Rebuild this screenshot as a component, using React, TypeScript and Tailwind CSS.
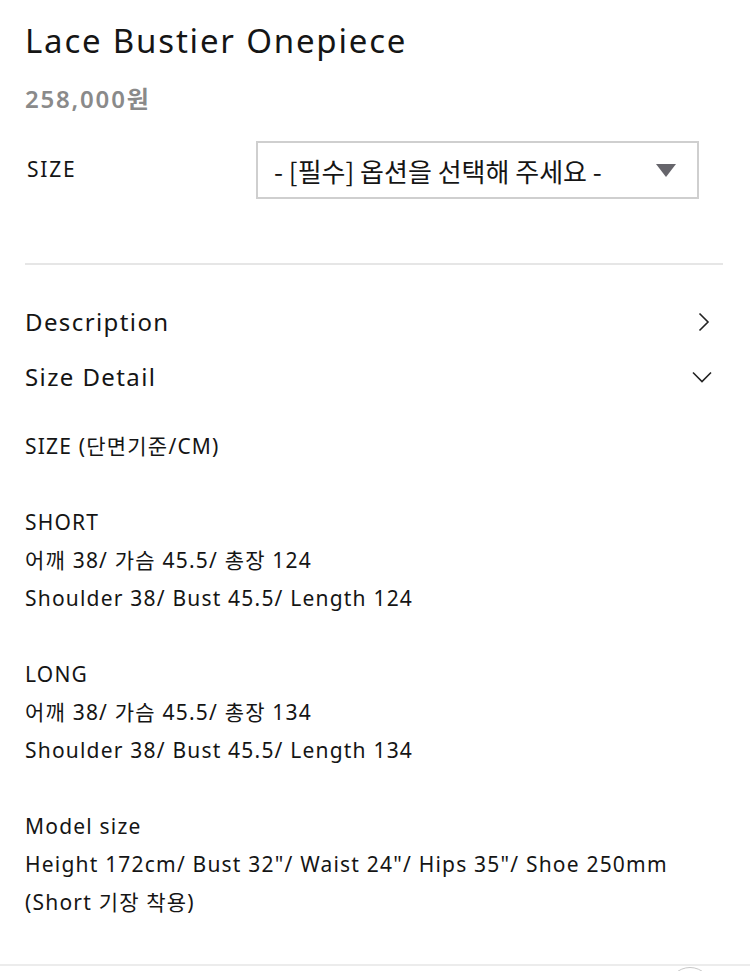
import { useState } from 'react';

type Block = { lines: string[] };

const sizeBlocks: Block[] = [
  { lines: ['SIZE (단면기준/CM)'] },
  { lines: ['SHORT', '어깨 38/ 가슴 45.5/ 총장 124', 'Shoulder 38/ Bust 45.5/ Length 124'] },
  { lines: ['LONG', '어깨 38/ 가슴 45.5/ 총장 134', 'Shoulder 38/ Bust 45.5/ Length 134'] },
  {
    lines: [
      'Model size',
      'Height 172cm/ Bust 32"/ Waist 24"/ Hips 35"/ Shoe 250mm',
      '(Short 기장 착용)',
    ],
  },
];

function ChevronRight() {
  return (
    <svg width="12" height="20" viewBox="0 0 12 20" fill="none" stroke="#222" strokeWidth="1.6">
      <path d="M1.5 1.5 L10 10 L1.5 18.5" />
    </svg>
  );
}

function ChevronDown() {
  return (
    <svg width="20" height="12" viewBox="0 0 20 12" fill="none" stroke="#222" strokeWidth="1.6">
      <path d="M1 1.5 L10 10.5 L19 1.5" />
    </svg>
  );
}

export default function App() {
  const [open, setOpen] = useState(true);

  return (
    <div className="relative w-[750px] h-[971px] overflow-hidden bg-white text-[#151515] font-['Noto_Sans','Noto_Sans_CJK_KR',sans-serif]">
      <div className="px-[25px]">
        <h1 className="pt-[21px] text-[33px] leading-[40px] tracking-[1.8px]">Lace Bustier Onepiece</h1>
        <p className="mt-[23px] text-[24px] leading-[30px] font-semibold tracking-[1.8px] text-[#8a8a8a]">258,000원</p>

        <div className="mt-[27px] flex items-center">
          <span className="w-[231px] pl-[2px] text-[21px] tracking-[1.8px]">SIZE</span>
          <div className="flex items-center justify-between w-[443px] h-[58px] border-2 border-[#cfcfcf] pl-[16px] pr-[21px]">
            <span className="text-[26px] font-['Noto_Sans_CJK_KR','Noto_Sans',sans-serif]">- [필수] 옵션을 선택해 주세요 -</span>
            <svg width="20" height="13" viewBox="0 0 20 13">
              <path d="M0 0 H20 L10 13 Z" fill="#66656b" />
            </svg>
          </div>
        </div>

        <div className="mt-[64px] h-[2px] w-[698px] bg-[#e6e6e6]" />

        <div className="mt-[29px] flex items-center justify-between h-[55px] pr-[15px]">
          <span className="text-[24px] tracking-[1.4px]">Description</span>
          <ChevronRight />
        </div>
        <button
          onClick={() => setOpen(!open)}
          className="flex items-center justify-between w-full h-[55px] pr-[13px]"
        >
          <span className="text-[24px] tracking-[1.4px]">Size Detail</span>
          <ChevronDown />
        </button>

        {open && (
          <div className="mt-[23px] flex flex-col gap-[38px] text-[21px] leading-[38px] tracking-[1.2px]">
            {sizeBlocks.map((b, i) => (
              <div key={i}>
                {b.lines.map((l) => (
                  <p key={l}>{l}</p>
                ))}
              </div>
            ))}
          </div>
        )}
      </div>

      <div className="absolute left-0 right-0 top-[964px] h-[10px] border-t-2 border-[#ececec] bg-white">
        <div className="absolute left-[668px] top-[1px] w-[44px] h-[44px] rounded-full border border-[#c8c8c8] bg-white" />
      </div>
    </div>
  );
}
